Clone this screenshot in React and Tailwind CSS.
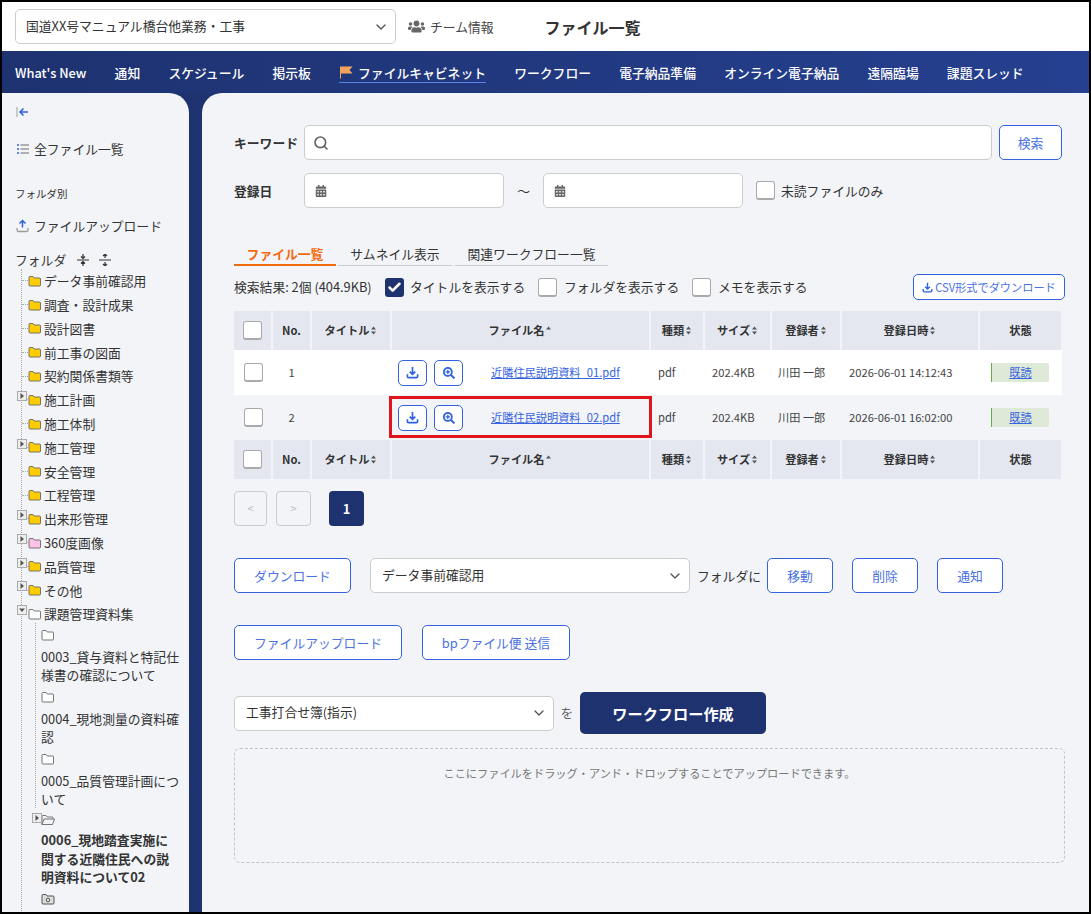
import React from "react";
import { ChevronDown, Search, Check } from "lucide-react";
import { FaUsers, FaCalendarAlt, FaSearchPlus } from "react-icons/fa";

const font = { fontFamily: '"Noto Sans CJK JP", "Noto Sans", sans-serif' };

const navItems = ["What's New", "通知", "スケジュール", "掲示板", "ファイルキャビネット", "ワークフロー", "電子納品準備", "オンライン電子納品", "遠隔臨場", "課題スレッド"];

const folders = [
  { name: "データ事前確認用" },
  { name: "調査・設計成果" },
  { name: "設計図書" },
  { name: "前工事の図面" },
  { name: "契約関係書類等" },
  { name: "施工計画", closed: true },
  { name: "施工体制" },
  { name: "施工管理", closed: true },
  { name: "安全管理" },
  { name: "工程管理" },
  { name: "出来形管理", closed: true },
  { name: "360度画像", closed: true, color: "#ffc0ea" },
  { name: "品質管理", closed: true },
  { name: "その他", closed: true },
];

const subFolders = [
  ["0003_貸与資料と特記仕", "様書の確認について"],
  ["0004_現地測量の資料確", "認"],
  ["0005_品質管理計画につ", "いて"],
];

const files = [
  { no: 1, name: "近隣住民説明資料_01.pdf", date: "2026-06-01 14:12:43", bg: "bg-white" },
  { no: 2, name: "近隣住民説明資料_02.pdf", date: "2026-06-01 16:02:00", bg: "" },
];

function Folder({ color = "#ffcc00" }) {
  return (
    <svg width="13" height="12" viewBox="0 0 13 12" className="shrink-0">
      <path d="M1 2.5 Q1 1.5 2 1.5 H5 L6.2 3 H11.5 Q12.5 3 12.5 4 V10 Q12.5 11 11.5 11 H2 Q1 11 1 10 Z" fill={color} stroke="#666" strokeWidth="0.9" />
    </svg>
  );
}

function OpenFolder() {
  return (
    <svg width="14" height="12" viewBox="0 0 14 12" className="shrink-0">
      <path d="M1 10.5 V2.5 Q1 1.5 2 1.5 H5 L6.2 3 H11 Q12 3 12 4 V5 M1 10.5 L3 5 H13.5 L11.5 10.5 Z" fill="none" stroke="#666" strokeWidth="0.9" />
    </svg>
  );
}

function Expander({ open, className }) {
  return (
    <span className={`absolute flex h-[10px] w-[10px] items-center justify-center border border-[#aaa] bg-[#eee] ${className}`}>
      <svg width="6" height="6" viewBox="0 0 6 6">
        {open ? <path d="M0 1.5 H6 L3 5 Z" fill="#555" /> : <path d="M1.5 0 V6 L5 3 Z" fill="#555" />}
      </svg>
    </span>
  );
}

function Checkbox({ checked, className = "" }) {
  if (checked) {
    return (
      <span className={`flex h-[19px] w-[19px] shrink-0 items-center justify-center rounded-[3px] bg-[#1e3270] ${className}`}>
        <Check size={15} strokeWidth={4} color="#fff" />
      </span>
    );
  }
  return <span className={`block h-[19px] w-[19px] shrink-0 rounded-[3px] border border-[#aaa] border-b-2 bg-white ${className}`} />;
}

function DownloadIcon({ size = 13 }) {
  return (
    <svg width={size} height={size} viewBox="0 0 14 14" className="shrink-0" fill="none" stroke="#2f62e0" strokeWidth="1.8">
      <path d="M7 1 V8.5 M4 6 L7 9 L10 6" />
      <path d="M1.5 9 V11.2 Q1.5 12.6 3 12.6 H11 Q12.5 12.6 12.5 11.2 V9" />
    </svg>
  );
}

function SortIcon({ up }) {
  return (
    <svg width="7" height="9" viewBox="0 0 7 9" className="ml-[1px] shrink-0">
      <path d="M3.5 0.5 L6 3.5 H1 Z" fill="#555" />
      {!up && <path d="M3.5 8.5 L6 5.5 H1 Z" fill="#555" />}
    </svg>
  );
}

function OutlineButton({ children, className = "" }) {
  return (
    <button className={`flex h-[35px] items-center justify-center rounded-[5px] border border-[#3563e0] bg-white text-[12.8px] text-[#4a72e0] ${className}`}>
      {children}
    </button>
  );
}

function SelectBox({ children, className = "" }) {
  return (
    <div className={`flex h-[35px] items-center justify-between rounded-[5px] border border-[#ccc] bg-white text-[12.8px] text-[#333] ${className}`}>
      <span className="-mt-[2px]">{children}</span>
      <ChevronDown size={16} strokeWidth={2} color="#555" />
    </div>
  );
}

function HeadCell({ children, sort, className = "" }) {
  return (
    <th className={`border-r-2 border-[#f2f4f8] bg-[#e4e7f0] p-0 text-[11.2px] font-bold text-[#333] ${className}`}>
      <span className="flex items-center justify-center">
        {children}
        {sort === "both" && <SortIcon />}
        {sort === "up" && <SortIcon up />}
      </span>
    </th>
  );
}

function HeadRow() {
  return (
    <tr className="h-[39px]">
      <HeadCell><Checkbox /></HeadCell>
      <HeadCell>No.</HeadCell>
      <HeadCell sort="both">タイトル</HeadCell>
      <HeadCell sort="up">ファイル名</HeadCell>
      <HeadCell sort="both">種類</HeadCell>
      <HeadCell sort="both">サイズ</HeadCell>
      <HeadCell sort="both">登録者</HeadCell>
      <HeadCell sort="both">登録日時</HeadCell>
      <HeadCell className="border-r-0">状態</HeadCell>
    </tr>
  );
}

function Sidebar() {
  return (
    <aside className="relative h-full w-[187px] shrink-0 overflow-hidden rounded-tr-[20px] bg-[#f2f4f8] text-[#333]">
      <svg width="14" height="12" viewBox="0 0 14 12" className="ml-[14px] mt-[13px]">
        <path d="M1 1 V11" stroke="#bbb" strokeWidth="1.5" />
        <path d="M12 6 H4.5 M7.5 2.5 L4 6 L7.5 9.5" stroke="#2f62e0" strokeWidth="1.5" fill="none" />
      </svg>
      <div className="ml-[14px] mt-[21px] flex h-[20px] items-center gap-[4px] text-[12.8px]">
        <svg width="14" height="12" viewBox="0 0 14 12">
          <path d="M1 2 H3 M1 6 H3 M1 10 H3" stroke="#2f62e0" strokeWidth="1.6" />
          <path d="M4.5 2 H13 M4.5 6 H13 M4.5 10 H13" stroke="#999" strokeWidth="1.3" />
        </svg>
        全ファイル一覧
      </div>
      <div className="ml-[13px] mt-[27px] h-[16px] text-[10.5px] leading-[16px]">フォルダ別</div>
      <div className="ml-[14px] mt-[14px] flex h-[20px] items-center gap-[5px] text-[12.8px]">
        <svg width="13" height="14" viewBox="0 0 13 14" fill="none">
          <path d="M6.5 8.5 V1.5 M3.5 4.5 L6.5 1.5 L9.5 4.5" stroke="#2f62e0" strokeWidth="1.5" />
          <path d="M1 9 V11 Q1 12.5 2.5 12.5 H10.5 Q12 12.5 12 11 V9" stroke="#999" strokeWidth="1.3" />
        </svg>
        ファイルアップロード
      </div>
      <div className="ml-[13px] mt-[14px] flex h-[19px] items-center text-[12.8px]">
        <span>フォルダ</span>
        <svg width="12" height="12" viewBox="0 0 12 12" className="ml-[11px]" fill="none" stroke="#333" strokeWidth="1.2">
          <path d="M0 6 H12 M6 0 V4 M4 2.5 L6 4.5 L8 2.5 M6 12 V8 M4 9.5 L6 7.5 L8 9.5" />
        </svg>
        <svg width="12" height="12" viewBox="0 0 12 12" className="ml-[10px]" fill="none" stroke="#333" strokeWidth="1.2">
          <path d="M0 6 H12 M6 4 V0 M4 2 L6 0 L8 2 M6 8 V12 M4 10 L6 12 L8 10" />
        </svg>
      </div>
      <div className="ml-[19px] border-l border-dotted border-[#aaa] pb-[40px]">
        {folders.map((f) => (
          <div key={f.name} className="relative flex h-[23.8px] items-center text-[12.8px]">
            <span className="h-0 w-[6px] shrink-0 border-t border-dotted border-[#aaa]" />
            {f.closed && <Expander className="left-[-5px] top-[3px]" />}
            <Folder color={f.color} />
            <span className="ml-[3px] whitespace-nowrap">{f.name}</span>
          </div>
        ))}
        <div className="relative flex h-[23.8px] items-center text-[12.8px]">
          <span className="w-[6px] shrink-0" />
          <Expander open className="left-[-5px] top-[3px]" />
          <Folder color="#fff" />
          <span className="ml-[3px] whitespace-nowrap">課題管理資料集</span>
        </div>
        <div className="-mt-[3px] ml-[13px] border-l border-dotted border-[#aaa]">
          {subFolders.map((lines) => (
            <div key={lines[0]} className="pl-[5px] text-[12.8px] leading-[18.4px]">
              <div className="flex h-[25px] items-center">
                <Folder color="#fff" />
              </div>
              {lines.map((l) => (
                <div key={l} className="whitespace-nowrap">{l}</div>
              ))}
            </div>
          ))}
        </div>
        <div className="relative ml-[19px] text-[12.8px] font-bold leading-[18.4px]">
          <Expander className="left-[-9px] top-[5px]" />
          <div className="flex h-[23px] items-center">
            <OpenFolder />
          </div>
          <div className="whitespace-nowrap">0006_現地踏査実施に</div>
          <div className="whitespace-nowrap">関する近隣住民への説</div>
          <div className="whitespace-nowrap">明資料について02</div>
          <svg width="14" height="12" viewBox="0 0 14 12" className="mt-[6px]">
            <path d="M1 2.5 Q1 1.5 2 1.5 H5 L6 3 H12 Q13 3 13 4 V10 Q13 11 12 11 H2 Q1 11 1 10 Z" fill="#ddd" stroke="#555" strokeWidth="1" />
            <circle cx="7" cy="7" r="1.8" fill="none" stroke="#555" strokeWidth="1" />
          </svg>
        </div>
      </div>
    </aside>
  );
}

function Main() {
  return (
    <main className="ml-[13px] h-full flex-1 overflow-hidden rounded-tl-[20px] bg-[#f2f4f8] pl-[32px] pr-[24px] pt-[32px] text-[#333]">
      <div className="flex items-center">
        <span className="w-[70px] text-[12.8px] font-bold">キーワード</span>
        <div className="flex h-[35px] w-[688px] items-center rounded-[5px] border border-[#ccc] bg-white pl-[8px]">
          <Search size={16} strokeWidth={2.5} color="#666" />
        </div>
        <OutlineButton className="ml-[7px] w-[63px]">検索</OutlineButton>
      </div>
      <div className="mt-[13px] flex items-center">
        <span className="w-[70px] text-[12.8px] font-bold">登録日</span>
        <div className="flex h-[35px] w-[200px] items-center rounded-[5px] border border-[#ccc] bg-white pl-[10px]">
          <FaCalendarAlt size={12} color="#666" />
        </div>
        <span className="w-[39px] text-center text-[13px]">～</span>
        <div className="flex h-[35px] w-[200px] items-center rounded-[5px] border border-[#ccc] bg-white pl-[10px]">
          <FaCalendarAlt size={12} color="#666" />
        </div>
        <Checkbox className="ml-[13px]" />
        <span className="ml-[6px] text-[12.8px]">未読ファイルのみ</span>
      </div>

      <div className="mt-[36px] flex h-[22px] gap-[2px] text-[12.8px]">
        <span className="w-[102px] border-b-2 border-[#f26a0f] text-center font-bold text-[#f26a0f]">ファイル一覧</span>
        <span className="w-[114px] border-b border-[#ccc] text-center">サムネイル表示</span>
        <span className="ml-[1px] w-[153px] border-b border-[#ccc] text-center">関連ワークフロー一覧</span>
      </div>

      <div className="mt-[8px] flex h-[26px] items-center text-[12.8px]">
        <span className="w-[151px]">検索結果: 2個 (404.9KB)</span>
        <Checkbox checked />
        <span className="ml-[6px] w-[128px]">タイトルを表示する</span>
        <Checkbox />
        <span className="ml-[7px] w-[128px]">フォルダを表示する</span>
        <Checkbox />
        <span className="ml-[7px]">メモを表示する</span>
        <button className="ml-auto flex h-[26px] w-[152px] items-center justify-center gap-[2px] rounded-[5px] border border-[#3563e0] bg-white text-[11.2px] text-[#4a72e0]">
          <DownloadIcon size={11} />
          CSV形式でダウンロード
        </button>
      </div>

      <table className="mt-[11px] w-[828px] table-fixed border-collapse">
        <colgroup>
          <col className="w-[38px]" />
          <col className="w-[39px]" />
          <col className="w-[80px]" />
          <col className="w-[259px]" />
          <col className="w-[54px]" />
          <col className="w-[67px]" />
          <col className="w-[70px]" />
          <col className="w-[138px]" />
          <col className="w-[83px]" />
        </colgroup>
        <thead>
          <HeadRow />
        </thead>
        <tbody>
          {files.map((f) => (
            <tr key={f.no} className={`h-[45px] ${f.bg} text-[11.2px] text-[#444]`}>
              <td className="p-0 pl-[10px]"><Checkbox /></td>
              <td className="p-0 text-center">{f.no}</td>
              <td className="p-0" />
              <td className="p-0">
                <div className="flex items-center pl-[7px]">
                  <span className="flex h-[26px] w-[29px] items-center justify-center rounded-[5px] border border-[#3563e0] bg-white">
                    <DownloadIcon />
                  </span>
                  <span className="ml-[7px] flex h-[26px] w-[29px] items-center justify-center rounded-[5px] border border-[#3563e0] bg-white">
                    <FaSearchPlus size={12} color="#2f62e0" />
                  </span>
                  <a className="ml-[28px] whitespace-nowrap text-[#3563e0] underline">{f.name}</a>
                </div>
              </td>
              <td className="p-0 pl-[8px]">pdf</td>
              <td className="p-0 pl-[8px]">202.4KB</td>
              <td className="p-0 pl-[7px]">川田 一郎</td>
              <td className="p-0 pl-[8px] whitespace-nowrap">{f.date}</td>
              <td className="p-0 pl-[12px]">
                <span className="flex h-[19px] w-[58px] items-center justify-center rounded-r-[2px] border-l border-[#6aa84f] bg-[#dfe9d8] text-[#3563e0] underline">既読</span>
              </td>
            </tr>
          ))}
        </tbody>
        <tfoot>
          <HeadRow />
        </tfoot>
      </table>

      <div className="mt-[12px] flex items-center">
        <span className="flex h-[35px] w-[33px] items-center justify-center rounded-[4px] border border-[#ccc] text-[11px] text-[#bbb]">&lt;</span>
        <span className="ml-[9px] flex h-[35px] w-[35px] items-center justify-center rounded-[4px] border border-[#ccc] text-[11px] text-[#bbb]">&gt;</span>
        <span className="ml-[18px] flex h-[35px] w-[35px] items-center justify-center rounded-[4px] bg-[#1e3270] text-[12.8px] font-bold text-white">1</span>
      </div>

      <div className="mt-[32px] flex items-center">
        <OutlineButton className="w-[117px]">ダウンロード</OutlineButton>
        <SelectBox className="ml-[19px] w-[320px] pl-[11px] pr-[6px]">データ事前確認用</SelectBox>
        <span className="ml-[7px] w-[70px] text-[12.8px]">フォルダに</span>
        <OutlineButton className="w-[66px]">移動</OutlineButton>
        <OutlineButton className="ml-[19px] w-[66px]">削除</OutlineButton>
        <OutlineButton className="ml-[19px] w-[66px]">通知</OutlineButton>
      </div>

      <div className="mt-[32px] flex items-center gap-[20px]">
        <OutlineButton className="w-[168px]">ファイルアップロード</OutlineButton>
        <OutlineButton className="w-[148px]">bpファイル便 送信</OutlineButton>
      </div>

      <div className="mt-[32px] flex items-center">
        <SelectBox className="w-[320px] pl-[11px] pr-[6px]">工事打合せ簿(指示)</SelectBox>
        <span className="w-[26px] text-center text-[12.8px] text-[#666]">を</span>
        <button className="h-[42px] w-[186px] rounded-[5px] bg-[#1e3270] text-[15.2px] font-bold text-white">ワークフロー作成</button>
      </div>

      <div className="mt-[14px] h-[115px] w-[831px] rounded-[6px] border border-dashed border-[#c4c4c4] pt-[16px] text-center text-[11.2px] text-[#777]">
        ここにファイルをドラッグ・アンド・ドロップすることでアップロードできます。
      </div>
    </main>
  );
}

export default function App() {
  return (
    <div style={font} className="relative flex h-[914px] w-[1091px] flex-col overflow-hidden border-2 border-black bg-white">
      <header className="flex h-[49px] shrink-0 items-center bg-white pl-[13px]">
        <SelectBox className="w-[381px] pl-[10px] pr-[6px]">国道XX号マニュアル橋台他業務・工事</SelectBox>
        <div className="ml-[12px] flex items-center gap-[5px] text-[12.8px] text-[#444]">
          <FaUsers size={17} color="#666" />
          チーム情報
        </div>
        <h1 className="ml-[51px] text-[16px] font-bold text-[#333]">ファイル一覧</h1>
      </header>
      <nav className="flex h-[42px] shrink-0 items-center gap-[28.2px] bg-gradient-to-r from-[#1e3270] to-[#254090] pl-[13px] pt-[2px] text-[12.8px] font-medium text-white">
        {navItems.map((item) =>
          item === "ファイルキャビネット" ? (
            <span key={item} className="flex items-center gap-[4px] border-b border-[#5a82e8] leading-[18px]">
              <svg width="15" height="13" viewBox="0 0 15 13">
                <path d="M1 0.5 H13.5 L10.5 4 L13.5 7.5 H2 V12.5 H1 Z" fill="#f5a35c" />
              </svg>
              {item}
            </span>
          ) : (
            <span key={item} className="whitespace-nowrap">{item}</span>
          )
        )}
      </nav>
      <div className="flex h-[819px] flex-1 overflow-hidden bg-[#1e3270]">
        <Sidebar />
        <Main />
      </div>
      {/* red box drawn on the screenshot */}
      <div className="absolute left-[387px] top-[394px] h-[42px] w-[263px] border-[3px] border-[#e0141c]" />
    </div>
  );
}
